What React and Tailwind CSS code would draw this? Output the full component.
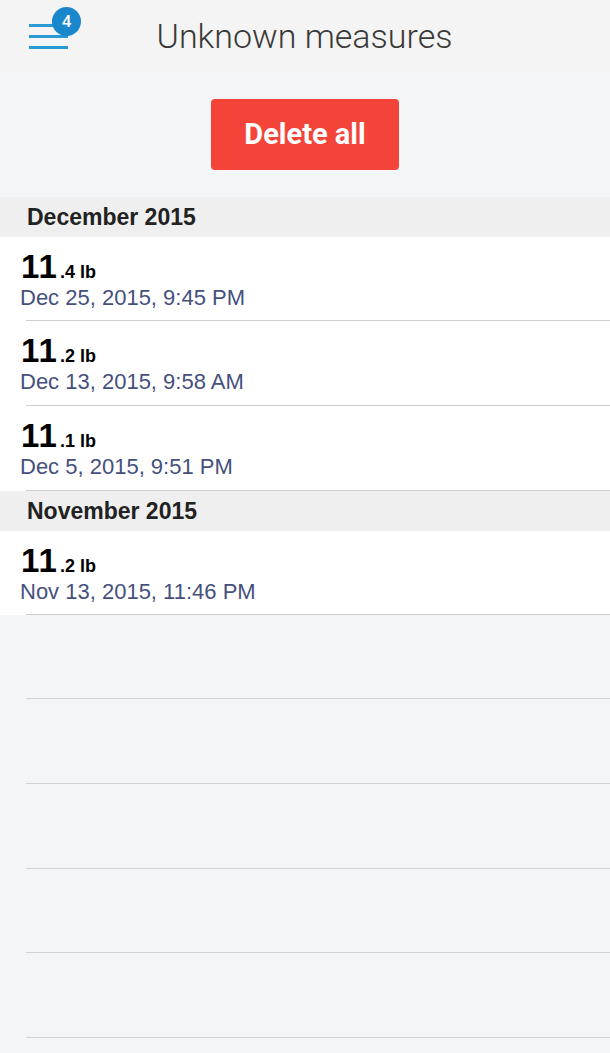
import React from "react";

const groups = [
  {
    month: "December 2015",
    items: [
      { whole: "11", frac: ".4", date: "Dec 25, 2015, 9:45 PM", h: "h-[83px]" },
      { whole: "11", frac: ".2", date: "Dec 13, 2015, 9:58 AM", h: "h-[84px]" },
      { whole: "11", frac: ".1", date: "Dec 5, 2015, 9:51 PM", h: "h-[84px]" },
    ],
  },
  {
    month: "November 2015",
    items: [
      { whole: "11", frac: ".2", date: "Nov 13, 2015, 11:46 PM", h: "h-[83px]" },
    ],
  },
];

// empty rows below the list keep the same ruled look
const emptyRows = ["h-[83px]", "h-[84px]", "h-[84px]", "h-[83px]", "h-[84px]"];

const MenuIcon = ({ count }) => (
  <div className="relative w-[60px] h-[50px]">
    <div className="absolute left-[29px] top-[24px] w-[39px] h-[3px] bg-[#2a9ad6]" />
    <div className="absolute left-[29px] top-[35px] w-[39px] h-[3px] bg-[#2a9ad6]" />
    <div className="absolute left-[29px] top-[46px] w-[39px] h-[3px] bg-[#2a9ad6]" />
    <div className="absolute left-[52px] top-[7px] w-[29px] h-[29px] rounded-full bg-[#1a86cc] flex items-center justify-center text-white text-[17px] font-medium font-['Roboto',sans-serif]">
      {count}
    </div>
  </div>
);

const Row = ({ item }) => (
  <div className="bg-white">
    <div className={`${item.h} pl-[20px] pt-[13px] font-['Liberation_Sans',Arial,sans-serif]`}>
      <div className="flex items-baseline leading-none pl-px">
        <span className="text-[33px] font-bold text-black tracking-[1px]">
          {item.whole}
        </span>
        <span className="text-[18px] font-bold text-black ml-[2px]">
          {item.frac} lb
        </span>
      </div>
      <div className="text-[22px] text-[#45507d] mt-[4px] leading-none">
        {item.date}
      </div>
    </div>
    <div className="ml-[26px] h-px bg-[#cfcfd3]" />
  </div>
);

const App = () => {
  return (
    <div className="min-h-screen bg-[#f4f5f7] overflow-hidden">
      <div className="relative h-[73px] bg-[#f4f4f4] flex items-center justify-center">
        <div className="absolute left-0 top-0">
          <MenuIcon count={4} />
        </div>
        <h1 className="text-[34px] font-light text-[#3a3a3a] font-['Roboto',sans-serif] leading-none mt-[-2px] ml-[-1px]">
          Unknown measures
        </h1>
      </div>

      <div className="flex justify-center pt-[26px] pb-[27px]">
        <button className="w-[188px] h-[71px] bg-[#f4443a] rounded-[4px] text-white text-[29px] font-bold font-['Roboto',sans-serif]">
          Delete all
        </button>
      </div>

      {groups.map((g) => (
        <div key={g.month}>
          <div className="h-[40px] bg-[#efefef] flex items-center pl-[27px] text-[23px] font-bold text-[#222] font-['Liberation_Sans',Arial,sans-serif]">
            {g.month}
          </div>
          {g.items.map((item) => (
            <Row key={item.date} item={item} />
          ))}
        </div>
      ))}

      {emptyRows.map((h, i) => (
        <div key={i}>
          <div className={h} />
          <div className="ml-[26px] h-px bg-[#d3d4d7]" />
        </div>
      ))}
    </div>
  );
};

export default App;
